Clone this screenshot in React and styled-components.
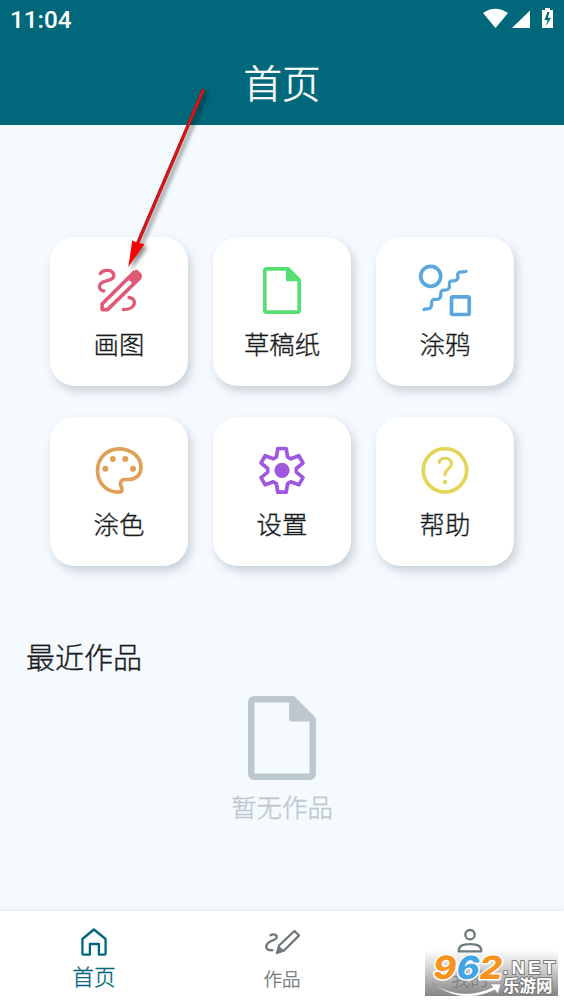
import React from "react";
import styled, { createGlobalStyle } from "styled-components";

const Global = createGlobalStyle`
  * { box-sizing: border-box; }
  body { margin: 0; background: #f5faff; font-family: Roboto, "Noto Sans CJK SC", sans-serif; }
`;

const Screen = styled.div`
  position: relative;
  width: 564px;
  height: 1002px;
  display: flex;
  flex-direction: column;
  overflow: hidden;
  background: #f5faff;
  color: #191c1d;
`;

const Header = styled.header`
  height: 125px;
  flex: none;
  background: #00687a;
  color: #fff;
`;

const StatusBar = styled.div`
  height: 40px;
  padding: 0 10px 0 10px;
  display: flex;
  justify-content: space-between;
  font: 500 24.3px/39px Roboto, sans-serif;
`;

const StatusIcons = styled.svg`
  width: 72px;
  height: 40px;
  fill: #fff;
`;

const Title = styled.h1`
  margin: 0;
  height: 85px;
  text-align: center;
  font: 300 38.5px/82px "Noto Sans CJK SC", sans-serif;
  -webkit-text-stroke: 0.5px currentColor;
`;

const Grid = styled.section`
  display: grid;
  grid-template-columns: repeat(3, 138px);
  grid-auto-rows: 149px;
  gap: 31px 25px;
  margin: 112px auto 0;
`;

const Card = styled.div`
  display: flex;
  flex-direction: column;
  align-items: center;
  padding-top: 23px;
  border-radius: 25px;
  background: #fff;
  box-shadow: 3px 5px 10px rgba(75, 95, 105, 0.27);
`;

const CardIcon = styled.svg`
  width: 60px;
  height: 60px;
  flex: none;
  color: ${(p) => p.$color};
  fill: none;
  stroke: currentColor;
  stroke-width: 3.7;
  stroke-linecap: round;
  stroke-linejoin: round;
`;

const CardLabel = styled.div`
  margin-top: 4px;
  font: 300 25.4px/38px "Noto Sans CJK SC", sans-serif;
  -webkit-text-stroke: 0.35px currentColor;
`;

const SectionTitle = styled.h2`
  margin: 68px 0 0 26px;
  font: 300 29px/44px "Noto Sans CJK SC", sans-serif;
  -webkit-text-stroke: 0.35px currentColor;
`;

const Empty = styled.div`
  display: flex;
  flex-direction: column;
  align-items: center;
  margin-top: 18px;
  color: #bcc8ce;
  font: 300 25.4px/38px "Noto Sans CJK SC", sans-serif;
  -webkit-text-stroke: 0.35px currentColor;
`;

const EmptyIcon = styled.svg`
  width: 68px;
  height: 84px;
  margin-bottom: 7px;
  fill: none;
  stroke: currentColor;
  stroke-width: 3.6;
  stroke-linejoin: round;
`;

const Nav = styled.nav`
  height: 91px;
  margin-top: auto;
  flex: none;
  display: grid;
  grid-template-columns: repeat(3, 1fr);
  background: #fff;
  box-shadow: 0 -1px 4px rgba(80, 110, 125, 0.14);
`;

const NavItem = styled.div`
  display: flex;
  flex-direction: column;
  align-items: center;
  padding-top: 11px;
  color: ${(p) => (p.$active ? "#00687a" : "#6f797c")};
  font: 300 ${(p) => (p.$active ? 21.7 : 18.5)}px/30px "Noto Sans CJK SC", sans-serif;
  -webkit-text-stroke: 0.35px currentColor;
`;

const NavIcon = styled.svg`
  width: 40px;
  height: 40px;
  fill: none;
  stroke: currentColor;
  stroke-width: 2.3;
  stroke-linecap: round;
  stroke-linejoin: round;
`;

const NavLabel = styled.span`
  margin-top: ${(p) => (p.$active ? -1 : 1)}px;
`;

const Pointer = styled.svg`
  position: absolute;
  left: 115px;
  top: 80px;
  width: 105px;
  height: 200px;
  filter: drop-shadow(3px 3px 2px rgba(0, 0, 0, 0.45));
`;

const Watermark = styled.svg`
  position: absolute;
  left: 425px;
  top: 950px;
  width: 133px;
  height: 46px;
  background: linear-gradient(rgba(255, 255, 255, 0), rgba(160, 160, 160, 0.55) 45%, rgba(115, 115, 115, 0.88));
`;

const gearPath =
  "M" +
  Array.from({ length: 6 }, (_, i) => {
    const a = (i * Math.PI) / 3;
    return [[-5.6, -13.3], [-4.2, -21.8], [4.2, -21.8], [5.6, -13.3]]
      .map(([x, y]) => {
        const px = 30 + x * Math.cos(a) - y * Math.sin(a);
        const py = 30.3 + x * Math.sin(a) + y * Math.cos(a);
        return `${px.toFixed(2)} ${py.toFixed(2)}`;
      })
      .join("L");
  }).join("L") +
  "Z";

const Doc = () => (
  <>
    <path d="M15 8.8H36L47.2 20V50.2Q47.2 52.2 45.2 52.2H14.8Q12.8 52.2 12.8 50.2V10.8Q12.8 8.8 15 8.8Z" />
    <path d="M34 7.5V20Q34 21.2 35.2 21.2H48.6L36 8Z" fill="currentColor" stroke="none" />
  </>
);

const tools = [
  {
    label: "画图",
    color: "#e05a77",
    icon: (
      <>
        <path strokeWidth="3.3" d="M11.2 13.6C14 9.6 22 9 24.4 13.5C26.5 19.5 20 20 15 21.6C9 24 9 30 14.8 31" />
        <path strokeWidth="3.3" d="M40 37.5C45 38 46.5 42 44.5 45.5C42.5 49 38.5 49.5 34.5 49.5" />
        <path strokeWidth="3.6" d="M13.1 44L44.8 12.5L50.8 18L18.6 49.6H13.1Z" />
        <path d="M37.5 18.5L45.2 10.8Q47.2 8.8 49.2 10.6L52.3 13.7Q54 15.8 52.3 17.7L44.5 25.4L42.5 22.5Q42 20.5 40 20.8Z" fill="currentColor" stroke="none" />
      </>
    ),
  },
  { label: "草稿纸", color: "#57df74", icon: <Doc /> },
  {
    label: "涂鸦",
    color: "#5aa7df",
    icon: (
      <>
        <circle cx="15.7" cy="16.3" r="10" />
        <rect x="36.5" y="36.8" width="17.7" height="17.7" rx="1.3" />
        <path
          strokeWidth="3.2"
          d="M9 49.6C10.5 48 12.5 49.5 14.5 48.6C18.5 46.5 15 42 17.5 40C19.5 38.5 21.5 40.5 24 38.7C28 36 24 33 26.5 31C28.5 29 30.5 31 33 29.2C36.5 27 32.5 23.5 35 21.5C37 20 39 22 41.5 20C45 17.5 41 15 43.5 12.8C46 10.5 48 13 51 11.3"
        />
      </>
    ),
  },
  {
    label: "涂色",
    color: "#df9f57",
    icon: (
      <>
        <path d="M31 52C17 53 8.5 42 8.5 30.5C8.5 18 18 8.8 30 8.8C42 8.8 52 16.5 52 27.5C52 35 46.5 39.5 39.5 39.5H36C32 39.5 30.5 43 32 46C33.5 48.5 33.5 51.5 31 52Z" />
        <g fill="currentColor" stroke="none">
          <circle cx="16.4" cy="28.8" r="3" />
          <circle cx="23.8" cy="19" r="3" />
          <circle cx="36.3" cy="19" r="3" />
          <circle cx="44" cy="28.8" r="3" />
        </g>
      </>
    ),
  },
  {
    label: "设置",
    color: "#9f57e0",
    icon: (
      <>
        <path d={gearPath} />
        <circle cx="30" cy="30.3" r="7.6" fill="currentColor" stroke="none" />
      </>
    ),
  },
  {
    label: "帮助",
    color: "#e1d657",
    icon: (
      <>
        <circle cx="30" cy="30.3" r="21.7" />
        <path strokeWidth="3" d="M24.2 22.5C24.2 16.5 36.5 16.5 36.5 23.8C36.5 29 30 28.5 30 35" />
        <circle cx="30" cy="42" r="2.2" fill="currentColor" stroke="none" />
      </>
    ),
  },
];

const tabs = [
  {
    label: "首页",
    active: true,
    icon: <path d="M8.4 17L19.9 7.5L31.6 17V31.5Q31.6 32.7 30.4 32.7H24.9V22H15.9V32.7H9.6Q8.4 32.7 8.4 31.5Z" />,
  },
  {
    label: "作品",
    icon: (
      <>
        <path d="M8.5 13.3C11 11.5 15.3 12.8 14.7 15.5C14 18.5 10 17.5 6 21C2.5 25 4.5 29 10.3 28.1" />
        <path d="M17 23.5L32.5 9L37 13.5L22 28.5L15 31Z" />
        <path d="M16.5 23.5L22.5 29L14.5 31.5Z" fill="currentColor" stroke="none" />
      </>
    ),
  },
  {
    label: "我的",
    icon: (
      <>
        <circle cx="20" cy="12.7" r="4.7" />
        <path d="M8.8 28.3C8.8 24.3 13 22.1 20 22.1S31.2 24.3 31.2 28.3V29.4H8.8Z" />
      </>
    ),
  },
];

export default function App() {
  return (
    <Screen>
      <Global />
      <Header>
        <StatusBar>
          <span>11:04</span>
          <StatusIcons viewBox="0 0 72 40">
            <path d="M1 13Q13 4.5 26 13L13.5 28Z" />
            <path d="M48 10.5V28H30Z" />
            <path fillRule="evenodd" d="M60 10H63V8H68V10H71V28H60V10ZM65.5 12L62.5 20H65.5L64 26L69 17.8H65.8L67.5 12Z" />
          </StatusIcons>
        </StatusBar>
        <Title>首页</Title>
      </Header>
      <Grid>
        {tools.map((t) => (
          <Card key={t.label}>
            <CardIcon viewBox="0 0 60 60" $color={t.color}>{t.icon}</CardIcon>
            <CardLabel>{t.label}</CardLabel>
          </Card>
        ))}
      </Grid>
      <SectionTitle>最近作品</SectionTitle>
      <Empty>
        <EmptyIcon viewBox="11 7 38 47"><Doc /></EmptyIcon>
        暂无作品
      </Empty>
      <Nav>
        {tabs.map((t) => (
          <NavItem key={t.label} $active={t.active}>
            <NavIcon viewBox="0 0 40 40">{t.icon}</NavIcon>
            <NavLabel $active={t.active}>{t.label}</NavLabel>
          </NavItem>
        ))}
      </Nav>
      <Pointer viewBox="115 80 105 200">
        <path d="M203 90.5L136 247" stroke="#9c1014" strokeWidth="3.2" strokeLinecap="round" />
        <path d="M203 90.5L136 247" stroke="#e0151a" strokeWidth="2.2" strokeLinecap="round" />
        <path d="M128.3 267L132.3 240.5L138 243L144.5 244Z" fill="#f00" />
      </Pointer>
      <Watermark viewBox="0 0 133 46">
        <path d="M7 33Q37 52 68 37L65 34L76 34L73 44L70 40Q36 56 7 33Z" fill="#fff" stroke="#888" strokeWidth=".6" />
        <g fontFamily="Liberation Sans, sans-serif" fontWeight="700" paintOrder="stroke" strokeLinejoin="round">
          <g fontFamily="Inter, sans-serif" fontWeight="800" fontSize="32" strokeWidth="3" stroke="#fff" transform="skewX(-10)">
            <text x="12" y="29" fill="#f7941e" textLength="23" lengthAdjust="spacingAndGlyphs">9</text>
            <text x="35" y="29" fill="#42a5e5" textLength="23" lengthAdjust="spacingAndGlyphs">6</text>
            <text x="58" y="29" fill="#f7941e" textLength="23" lengthAdjust="spacingAndGlyphs">2</text>
          </g>
          <g fill="#fff" stroke="#777" strokeWidth="2">
            <text x="78" y="23.5" fontSize="18.5" textLength="53" letterSpacing="1">.NET</text>
            <text x="78" y="42" fontSize="16.5" fontFamily="Noto Sans CJK SC, sans-serif">乐游网</text>
          </g>
        </g>
      </Watermark>
    </Screen>
  );
}
